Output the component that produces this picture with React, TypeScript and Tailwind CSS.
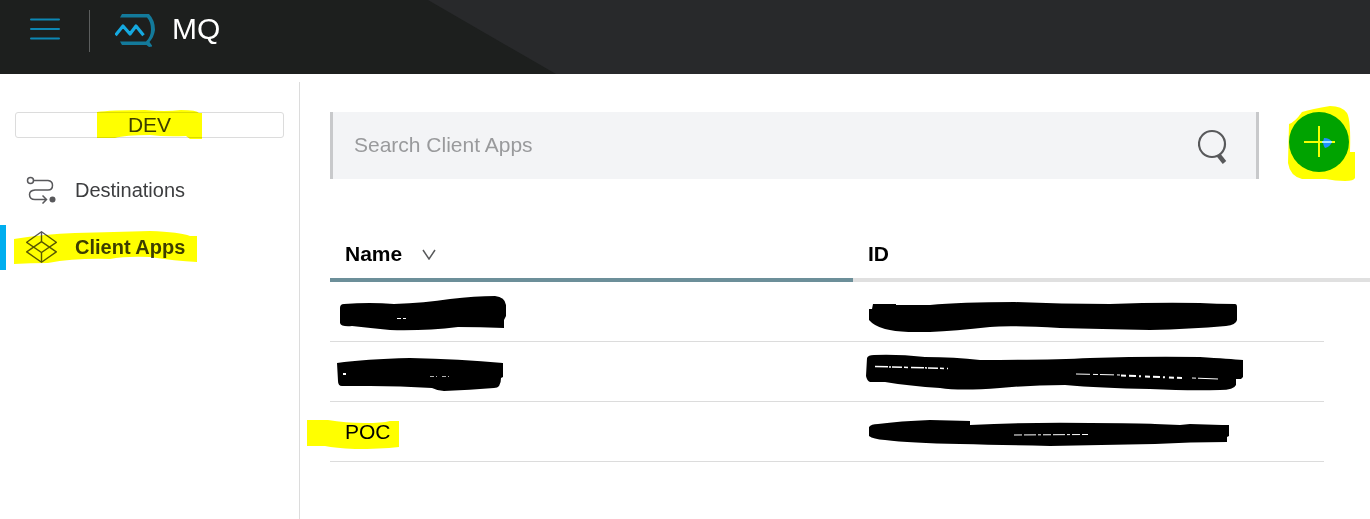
import React, { useState } from 'react';

type ClientApp = {
  name: string | null;
  label: string;
  nameMark?: React.ReactNode;
  idMark: React.ReactNode;
};

// Hand-drawn strokes that hide the private names and ids
const clientApps: ClientApp[] = [
  {
    name: null,
    label: 'Client app 1',
    nameMark: (
      <svg className="relative -left-2 block h-10 w-[184px]" viewBox="337 292 184 40" aria-hidden="true">
        <path d="M340 308Q340 304 344 304Q370 302 394 304Q425 303 450 299Q475 296 495 296Q505 297 506 305V316L504 320V328Q480 327 458 327Q425 331 390 330Q370 328 352 326Q341 327 340 323Z" />
        <path d="M397 318.500H407" stroke="#fff" strokeWidth="1" strokeDasharray="4 2 3 1" />
      </svg>
    ),
    idMark: (
      <svg className="relative -left-2 block h-10 w-[392px]" viewBox="860 292 392 40" aria-hidden="true">
        <path d="M873 304H897L898 305H930Q960 302 1015 302Q1060 304 1110 304Q1160 302 1200 303Q1216 304 1235 304Q1237 304 1237 307V320Q1236 325 1226 326Q1190 329 1150 330Q1100 329 1060 328Q1010 325 990 327Q955 331 930 332Q900 333 885 329Q874 326 869 320V309H872Z" />
        <path d="M896 304.500H924" stroke="#fff" strokeWidth="1" strokeDasharray="2 6 5 4" />
      </svg>
    ),
  },
  {
    name: null,
    label: 'Client app 2',
    nameMark: (
      <svg className="relative -left-2 block h-10 w-[184px]" viewBox="337 352 184 40" aria-hidden="true">
        <path d="M337 363Q365 359 410 358Q460 359 503 363V377L501 378Q501 388 494 388Q470 390 444 391Q438 391 432 388Q400 386 370 386H342Q338 386 338 381Z" />
        <path d="M343 374H346" stroke="#fff" strokeWidth="2" />
        <path d="M430 376.500H450" stroke="#fff" strokeWidth="1" strokeDasharray="4 2 1 5" opacity=".7" />
      </svg>
    ),
    idMark: (
      <svg className="relative -left-2 block h-10 w-[392px]" viewBox="860 352 392 40" aria-hidden="true">
        <path d="M867 358Q868 355 874 355Q898 354 925 357Q955 357 980 360Q1050 360 1090 358Q1150 356 1200 357Q1230 359 1243 360V377L1241 379H1236V385Q1234 390 1220 390Q1190 391 1150 389Q1100 388 1065 385Q1030 385 1000 388Q960 391 940 388Q910 386 885 382H870Q867 381 866 376Z" />
        <g stroke="#fff" fill="none">
          <path d="M875 366.500L948 368.500" strokeWidth="1.500" strokeDasharray="13 1 2 1 10 2 4 3" />
          <path d="M1076 374L1120 375" strokeWidth="1" strokeDasharray="14 3 5 2" />
          <path d="M1121 375.500L1182 378" strokeWidth="2" strokeDasharray="5 3 7 3 2 4" />
          <path d="M1192 378L1218 379" strokeWidth="1" strokeDasharray="4 2 20 1" />
        </g>
      </svg>
    ),
  },
  {
    name: 'POC',
    label: 'POC',
    idMark: (
      <svg className="relative -left-2 block h-10 w-[392px]" viewBox="860 412 392 40" aria-hidden="true">
        <path d="M869 427Q871 424 878 424Q900 421 930 420L970 421V425Q1030 422 1090 423Q1140 423 1155 424L1180 425L1190 424L1222 425H1229V436L1227 437V442Q1190 442 1155 444Q1100 445 1050 446Q1000 445 960 444Q910 443 885 440Q873 439 869 436Z" />
        <path d="M1014 435L1088 434.500" stroke="#fff" strokeWidth="1" strokeDasharray="8 2 12 2 3 2" />
      </svg>
    ),
  },
];

const MenuIcon = () => (
  <svg width="30" height="22" viewBox="0 0 30 22" stroke="#0d87b4" strokeWidth="2" strokeLinecap="round" aria-hidden="true">
    <path d="M1 1.500H29M1 11H29M1 20.500H29" />
  </svg>
);

const Logo = () => (
  <svg width="40" height="36" viewBox="115 11 40 36" fill="none" aria-hidden="true">
    <path d="M122 14H149Q155 20 155 30Q154 37 149.500 42L152 45.500V46.500L149 47L146.500 45H122L120 41.500H146Q151 37 151 29.500Q151 22 147 17.500H120Z" fill="#137a9b" />
    <path d="M116.500 34L123 26L130 34L136 26L142.500 34" stroke="#15a9e0" strokeWidth="3.200" strokeLinejoin="round" strokeLinecap="square" />
  </svg>
);

const RouteIcon = () => (
  <svg width="32" height="28" viewBox="26 176 32 28" fill="none" stroke="#58585b" strokeWidth="1.500" aria-hidden="true">
    <circle cx="30.500" cy="180.500" r="3" />
    <path d="M34 180.500H48Q52.500 181 52.500 185.200Q52.500 190 48 190H35Q29.500 190.500 29.500 194.500Q29.500 199.500 35 199.500H46M42.500 195.500L46.500 199.500L42.500 203.500" />
    <circle cx="52.500" cy="199.500" r="3" fill="#58585b" stroke="none" />
  </svg>
);

const LayersIcon = () => (
  <svg width="32" height="32" viewBox="26 231 32 32" fill="none" stroke="#58585b" strokeWidth="1.400" strokeLinejoin="round" aria-hidden="true">
    <path d="M41.500 231.700L56.300 242.300L41.500 252.500L26.700 242.300Z" />
    <path d="M41.500 241.700L56.300 251.900L41.500 262.200L26.700 251.900Z" />
    <path d="M41.500 232V241.500M41.500 252.500V262" />
  </svg>
);

const SearchIcon = () => (
  <svg width="30" height="36" viewBox="1198 128 30 36" fill="none" stroke="#58595b" aria-hidden="true">
    <circle cx="1212" cy="144" r="13" strokeWidth="2.200" />
    <path d="M1218.500 155L1224.500 162.500" strokeWidth="4.500" />
  </svg>
);

const App: React.FC = () => {
  const [query, setQuery] = useState('');

  return (
    <div className="flex min-h-screen flex-col overflow-hidden bg-white font-['Liberation_Sans',Arial,sans-serif] text-[#3c3d3f]">
      {/* Header */}
      <header className="relative h-[74px] shrink-0 bg-[#1d1f1e] text-white">
        <svg className="absolute inset-0 h-full w-full" aria-hidden="true">
          <path d="M428 0H4000V74H556Z" fill="#28292b" />
        </svg>
        <div className="relative flex items-start pt-[10px] pl-[30px]">
          <button className="flex h-[38px] items-center" aria-label="Menu">
            <MenuIcon />
          </button>
          <div className="ml-[29px] h-[42px] w-px bg-[#5c5e5e]" />
          <a href="#" className="ml-[25px] flex h-[38px] items-center gap-[17px]">
            <Logo />
            <span className="text-[30px] leading-[38px]">MQ</span>
          </a>
        </div>
      </header>

      <div className="mt-2 flex flex-1">
        {/* Sidebar */}
        <aside className="w-[300px] shrink-0 border-r border-[#dcdcdc] pt-[30px]">
          <button className="relative mx-[15px] block h-[26px] w-[269px] rounded-[3px] border border-[#dcdcdc] text-center text-[21px] leading-6">
            DEV
            <svg className="absolute -top-1 left-[81px] mix-blend-multiply" width="106" height="32" viewBox="97 109 106 32" aria-hidden="true">
              <path d="M97 112Q110 110 145 110Q165 112 181 110Q197 110 199 113H202V139H190L186 136Q165 137 150 135Q125 135 115 138H97Z" fill="#ff0" />
            </svg>
          </button>

          <nav className="mt-[30px] flex flex-col gap-3">
            <a href="#destinations" className="flex h-[45px] items-center gap-[17px] pb-0.5 pl-[26px] text-[20px]">
              <RouteIcon />
              Destinations
            </a>
            <a href="#client-apps" aria-current="page" className="relative flex h-[45px] items-center gap-[17px] border-l-[6px] border-[#00aeef] pb-0.5 pl-5 text-[20px] font-bold">
              <LayersIcon />
              Client Apps
              <svg className="absolute top-1 left-2 mix-blend-multiply" width="185" height="38" viewBox="14 229 185 38" aria-hidden="true">
                <path d="M14 239Q45 234 75 233Q115 232 150 231Q180 232 190 236H197V262Q175 261 150 257Q125 256 110 259Q75 258 48 263Q30 263 14 264Z" fill="#ff0" />
              </svg>
            </a>
          </nav>
        </aside>

        {/* Client apps */}
        <main className="min-w-0 flex-1 pt-[30px] pl-[30px]">
          <div className="flex items-start gap-[30px] pr-[21px]">
            <form className="flex h-[67px] flex-1 items-center border-x-[3px] border-[#c8c9cb] bg-[#f3f4f6] pr-7 pl-[21px]" onSubmit={(e) => e.preventDefault()}>
              <input
                type="search"
                aria-label="Search Client Apps"
                placeholder="Search Client Apps"
                className="h-full min-w-0 flex-1 bg-transparent pb-0.5 text-[21px] outline-none placeholder:text-[#999a9c]"
                value={query}
                onChange={(e) => setQuery(e.target.value)}
              />
              <button aria-label="Search">
                <SearchIcon />
              </button>
            </form>
            <button className="relative h-[60px] w-[60px]" aria-label="Add client app">
              <svg className="absolute -top-[7px] -left-[3px]" width="70" height="78" viewBox="1286 105 70 78" aria-hidden="true">
                <path d="M1289 124Q1295 122 1302 112Q1312 109 1330 106Q1342 106 1347 113Q1351 120 1350 152H1355V178Q1354 181 1345 181Q1335 181 1326 179H1302Q1290 176 1288 163Z" fill="#ff0" />
                <circle cx="1319" cy="142" r="30" fill="#00a300" />
                <path d="M1324 138Q1330 138 1332 142Q1330 147 1325 148Q1322 144 1324 138Z" fill="#1e90ff" />
                <path d="M1304 142H1335M1319 126V157" stroke="#f4ff00" strokeWidth="2" />
                <path d="M1322 142H1332" stroke="#a6e4ff" strokeWidth="2" />
              </svg>
            </button>
          </div>

          <table className="mt-[43px] w-full table-fixed border-separate border-spacing-0 text-left text-[21px] text-black">
            <colgroup>
              <col className="w-[523px]" />
              <col />
              <col className="w-[46px]" />
            </colgroup>
            <thead>
              <tr className="h-[60px]">
                <th className="border-b-4 border-[#6c8f99] pt-2 pl-[15px]" aria-sort="descending">
                  <button className="flex items-center gap-5">
                    Name
                    <svg width="14" height="11" viewBox="0 0 14 11" fill="none" stroke="#58595b" strokeWidth="1.500" aria-hidden="true">
                      <path d="M1 1L7 10L13 1" />
                    </svg>
                  </button>
                </th>
                <th className="border-b-4 border-[#e0e0e0] pt-2 pl-[15px]" colSpan={2}>ID</th>
              </tr>
            </thead>
            <tbody>
              {clientApps.map((app) => (
                <tr key={app.label} className="h-[60px]">
                  <td className="border-b border-[#dcdcdc] pl-[15px]">
                    {app.name ? (
                      <span className="relative">
                        {app.name}
                        <svg className="absolute -top-0.5 -left-[38px] mix-blend-multiply" width="94" height="32" viewBox="307 418 94 32" aria-hidden="true">
                          <path d="M307 420H328Q345 423 365 423Q382 423 390 421H399V447Q380 449 355 449Q335 448 325 446H307Z" fill="#ff0" />
                        </svg>
                      </span>
                    ) : (
                      app.nameMark
                    )}
                  </td>
                  <td className="border-b border-[#dcdcdc] pl-[15px]">{app.idMark}</td>
                  <td />
                </tr>
              ))}
            </tbody>
          </table>
        </main>
      </div>
    </div>
  );
};

export default App;
